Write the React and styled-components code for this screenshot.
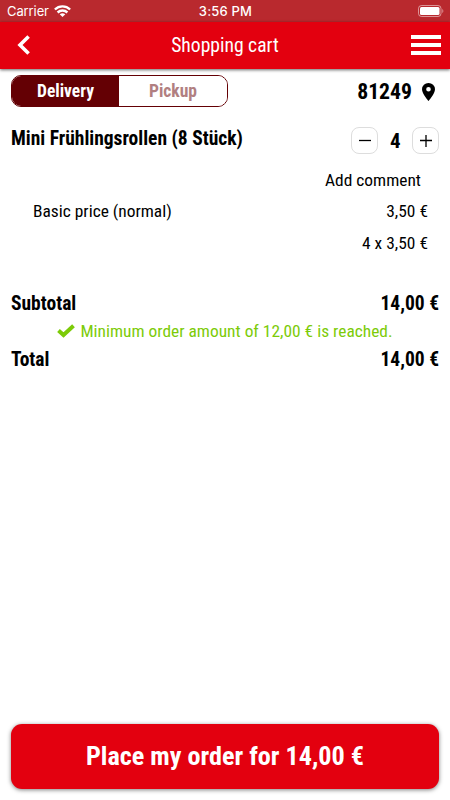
import React from 'react';
import styled, { createGlobalStyle } from 'styled-components';

const GlobalStyle = createGlobalStyle`
  * {
    box-sizing: border-box;
  }
  body {
    margin: 0;
    background-color: #fff;
  }
`;

const Screen = styled.div`
  width: 450px;
  height: 800px;
  display: flex;
  flex-direction: column;
  overflow: hidden;
  color: #000;
  background-color: #fff;
  font-family: "Roboto Condensed", Roboto, sans-serif;
  font-stretch: 75%;
`;

const StatusBar = styled.div`
  height: 22px;
  flex: none;
  display: grid;
  grid-template-columns: 1fr auto 1fr;
  align-items: center;
  padding: 0 6px 0 7px;
  background-color: #b9292e;
  color: #fff;
  font-family: Inter, sans-serif;
  font-stretch: 100%;
  font-size: 13px;
`;

const Carrier = styled.div`
  display: flex;
  align-items: center;
  gap: 5px;
  letter-spacing: -0.1px;
`;

const Clock = styled.div`
  font-weight: 500;
  letter-spacing: 0.2px;
`;

const Battery = styled.svg`
  justify-self: end;
`;

const Header = styled.header`
  height: 47px;
  flex: none;
  display: grid;
  grid-template-columns: 1fr auto 1fr;
  align-items: center;
  padding: 0 9px 1px;
  background-color: #e3000f;
  color: #fff;
  box-shadow: 0 1px 3px rgba(0, 0, 0, 0.6);
`;

const Title = styled.h1`
  margin: 0;
  padding-top: 2px;
  font-size: 19.6px;
  font-weight: 400;
  line-height: 24px;
`;

const IconButton = styled.button`
  display: flex;
  padding: ${({ $end }) => ($end ? '0' : '0 0 0 8px')};
  border: 0;
  background: none;
  color: inherit;
  justify-self: ${({ $end }) => ($end ? 'end' : 'start')};
`;

const Text = styled.span`
  white-space: nowrap;
  font-size: ${({ $size }) => $size || 17.4}px;
  font-weight: ${({ $bold }) => ($bold ? 700 : 400)};
  line-height: 24px;
`;

const Content = styled.main`
  flex: 1;
  padding: 6px 11px 0;
`;

const Row = styled.div`
  display: flex;
  align-items: center;
  justify-content: space-between;
  height: ${({ $height }) => $height}px;
  padding: ${({ $pad }) => $pad || '0'};
`;

const Toggle = styled.div`
  width: 217px;
  height: 32px;
  display: flex;
  border: 1px solid #640004;
  border-radius: 10px;
  overflow: hidden;
`;

const Option = styled.div`
  flex: ${({ $active }) => ($active ? '0 0 107px' : 1)};
  display: flex;
  align-items: center;
  justify-content: center;
  background-color: ${({ $active }) => ($active ? '#640004' : '#fff')};
  color: ${({ $active }) => ($active ? '#fff' : '#b17f81')};
`;

const Location = styled.div`
  display: flex;
  align-items: center;
  gap: 10px;
  padding: 1px 4px 0 0;
`;

const ItemName = styled.div`
  padding-bottom: 3px;
`;

const Stepper = styled.div`
  display: flex;
  align-items: center;
  gap: 11.5px;
`;

const StepButton = styled.button`
  width: 27px;
  height: 27px;
  display: flex;
  align-items: center;
  justify-content: center;
  padding: 0;
  border: 1px solid #ddd;
  border-radius: 8px;
  background-color: #fff;
  color: #000;
`;

const Notice = styled.div`
  height: 28px;
  display: flex;
  align-items: center;
  justify-content: center;
  gap: 5px;
  color: #7ccb08;
`;

const Footer = styled.footer`
  flex: none;
  padding: 0 11px 11px;
`;

const OrderButton = styled.button`
  width: 100%;
  height: 65px;
  display: flex;
  align-items: center;
  justify-content: center;
  padding: 0 0 2px;
  border: 0;
  border-radius: 11px;
  background-color: #e3000f;
  color: #fff;
  font-family: inherit;
  font-stretch: inherit;
  box-shadow: 0 1px 4px rgba(0, 0, 0, 0.5);
`;

function WifiIcon() {
  return (
    <svg width="17" height="12" viewBox="0 0 17 12" fill="none" stroke="#fff" strokeWidth="2.4">
      <path d="M.9 4.500C5.200.3 11.800.3 16.100 4.500" />
      <path d="M3.600 7.500C6.400 4.900 10.600 4.900 13.400 7.500" />
      <path d="M5.700 9.300Q8.500 7 11.300 9.300L8.500 12Z" fill="#fff" stroke="none" />
    </svg>
  );
}

function BatteryIcon() {
  return (
    <Battery width="26" height="12" viewBox="0 0 26 12" fill="none">
      <rect x=".5" y=".5" width="22.500" height="11" rx="3" stroke="#fff" strokeOpacity=".5" />
      <rect x="2" y="2" width="19.500" height="8" rx="1.500" fill="#fff" />
      <path d="M24.300 4v4c1.400-.5 1.400-3.500 0-4Z" fill="#fff" fillOpacity=".5" />
    </Battery>
  );
}

function App() {
  return (
    <Screen>
      <GlobalStyle />
      <StatusBar>
        <Carrier>
          <span>Carrier</span>
          <WifiIcon />
        </Carrier>
        <Clock>3:56 PM</Clock>
        <BatteryIcon />
      </StatusBar>
      <Header>
        <IconButton aria-label="Back">
          <svg width="13" height="20" viewBox="0 0 13 20">
            <path d="M11.600 1.500L3 10L11.600 18.500" fill="none" stroke="#fff" strokeWidth="3.600" />
          </svg>
        </IconButton>
        <Title>Shopping cart</Title>
        <IconButton $end aria-label="Menu">
          <svg width="30" height="20" viewBox="0 0 30 20" fill="#fff">
            <path d="M0 0h30v4H0zM0 8h30v4H0zM0 16h30v4H0z" />
          </svg>
        </IconButton>
      </Header>
      <Content>
        <Row $height={32}>
          <Toggle>
            <Option $active><Text $bold $size={17.5}>Delivery</Text></Option>
            <Option><Text $bold $size={17.5}>Pickup</Text></Option>
          </Toggle>
          <Location>
            <Text $bold $size={21.7}>81249</Text>
            <svg width="13" height="18" viewBox="0 0 14 20" preserveAspectRatio="none">
              <path d="M7 0a7 7 0 0 0-7 7c0 5.250 7 13 7 13s7-7.750 7-13a7 7 0 0 0-7-7zm0 9.500a2.500 2.500 0 1 1 0-5 2.500 2.500 0 0 1 0 5z" />
            </svg>
          </Location>
        </Row>
        <Row $height={57} $pad="10px 0 0">
          <ItemName>
            <Text $bold $size={19.5}>Mini Frühlingsrollen (8 Stück)</Text>
          </ItemName>
          <Stepper>
            <StepButton aria-label="Less">
              <svg width="12" height="12"><path d="M0 5.500h12" stroke="#000" strokeWidth="1.300" /></svg>
            </StepButton>
            <Text $bold $size={21}>4</Text>
            <StepButton aria-label="More">
              <svg width="12" height="12"><path d="M0 5.500h12M6 0v12" stroke="#000" strokeWidth="1.300" /></svg>
            </StepButton>
          </Stepper>
        </Row>
        <Row $height={32} $pad="0 18px 0 22px">
          <span />
          <Text>Add comment</Text>
        </Row>
        <Row $height={30} $pad="0 11px 0 22px">
          <Text>Basic price (normal)</Text>
          <Text>3,50 €</Text>
        </Row>
        <Row $height={33} $pad="0 11px 0 22px">
          <span />
          <Text>4 x 3,50 €</Text>
        </Row>
        <Row $height={58} $pad="32px 0 0">
          <Text $bold $size={19.5}>Subtotal</Text>
          <Text $bold $size={19.5}>14,00 €</Text>
        </Row>
        <Notice>
          <svg width="18" height="14" viewBox="0 0 18 14">
            <path d="M1.500 6.500L6.500 11L16.500 1.800" fill="none" stroke="#7ccb08" strokeWidth="4" />
          </svg>
          <Text>Minimum order amount of 12,00 € is reached.</Text>
        </Notice>
        <Row $height={28} $pad="1px 0 0">
          <Text $bold $size={19.5}>Total</Text>
          <Text $bold $size={19.5}>14,00 €</Text>
        </Row>
      </Content>
      <Footer>
        <OrderButton>
          <Text $bold $size={26.2}>Place my order for 14,00 €</Text>
        </OrderButton>
      </Footer>
    </Screen>
  );
}

export default App;
